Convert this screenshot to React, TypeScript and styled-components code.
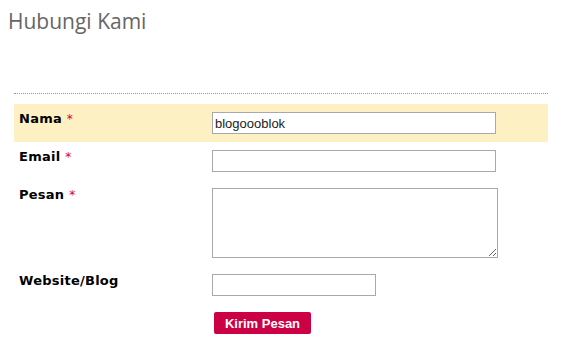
import React from 'react'
import styled, { createGlobalStyle } from 'styled-components'

const GlobalStyle = createGlobalStyle`
  html, body {
    margin: 0;
    padding: 0;
    background: #fff;
  }
`

const Page = styled.div`
  width: 562px;
  height: 345px;
  padding: 0 14px;
  box-sizing: border-box;
  overflow: hidden;
`

const Title = styled.h2`
  margin: 0 0 0 -6px;
  padding-top: 7px;
  height: 93px;
  box-sizing: border-box;
  font-family: 'Open Sans', sans-serif;
  font-weight: 400;
  font-size: 21px;
  line-height: 28px;
  color: #666;
`

const Divider = styled.div`
  border-top: 1px dotted #999;
  margin-bottom: 10px;
`

const Form = styled.form`
  width: 534px;
`

const Row = styled.div<{ $highlight?: boolean }>`
  display: grid;
  grid-template-columns: 193px 1fr;
  padding: 8px 0;
  background: ${(p) => (p.$highlight ? '#fdf1c4' : 'transparent')};
`

const Label = styled.label`
  padding: 0 5px;
  font-family: 'DejaVu Sans', Verdana, sans-serif;
  font-weight: 700;
  font-size: 13px;
  line-height: 13px;
  letter-spacing: 0.25px;
  color: #000;
`

const Req = styled.span`
  color: #e2001a;
  font-weight: 400;
  font-size: 12px;
`

const Field = styled.div`
  padding-left: 5px;
  display: flex;
`

const TextInput = styled.input<{ $w: number }>`
  width: ${(p) => p.$w}px;
  height: 22px;
  box-sizing: border-box;
  border: 1px solid #a9a9a9;
  padding: 0 2px;
  margin: 0;
  font-family: 'Liberation Sans', Arial, sans-serif;
  font-size: 13px;
  color: #222;
  background: #fff;
  outline: none;
`

const TextArea = styled.textarea`
  width: 286px;
  height: 70px;
  box-sizing: border-box;
  border: 1px solid #a9a9a9;
  margin: 0;
  padding: 2px;
  font-family: 'Liberation Sans', Arial, sans-serif;
  font-size: 13px;
  display: block;
`

const Actions = styled.div`
  padding: 8px 0 0 200px;
`

const Button = styled.button`
  width: 97px;
  height: 22px;
  border: none;
  border-radius: 2px;
  background: #cc0044;
  color: #fff;
  font-family: 'Liberation Sans', Arial, sans-serif;
  font-weight: 700;
  font-size: 13px;
  padding: 0;
  cursor: pointer;
`

export default function App() {
  return (
    <Page>
      <GlobalStyle />
      <Title>Hubungi Kami</Title>
      <Divider />
      <Form onSubmit={(e) => e.preventDefault()}>
        <Row $highlight>
          <Label>
            Nama <Req>*</Req>
          </Label>
          <Field>
            <TextInput $w={284} defaultValue="blogoooblok" />
          </Field>
        </Row>
        <Row>
          <Label>
            Email <Req>*</Req>
          </Label>
          <Field>
            <TextInput $w={284} />
          </Field>
        </Row>
        <Row>
          <Label>
            Pesan <Req>*</Req>
          </Label>
          <Field>
            <TextArea />
          </Field>
        </Row>
        <Row>
          <Label>Website/Blog</Label>
          <Field>
            <TextInput $w={164} />
          </Field>
        </Row>
        <Actions>
          <Button type="submit">Kirim Pesan</Button>
        </Actions>
      </Form>
    </Page>
  )
}
